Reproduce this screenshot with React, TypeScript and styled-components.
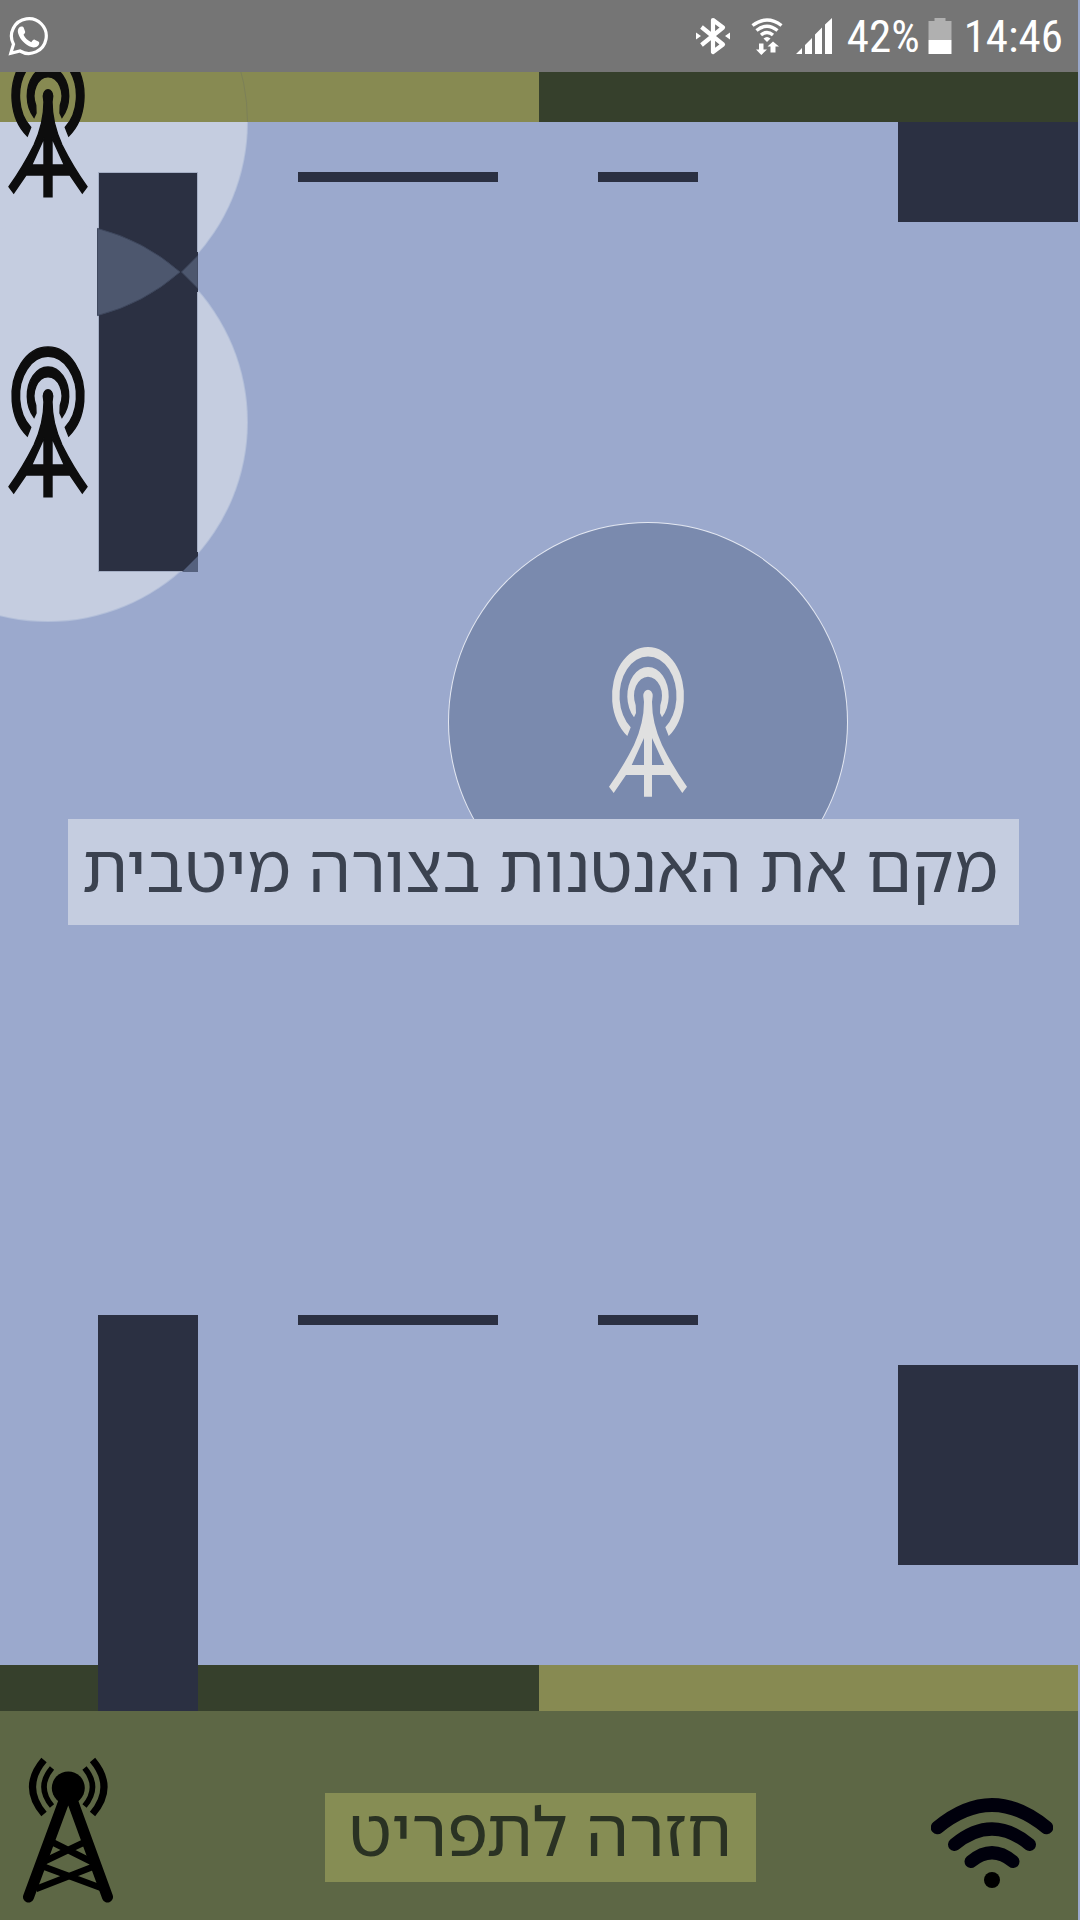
import React from "react";
import styled, { createGlobalStyle } from "styled-components";

const color = {
  status: "#757575",
  sky: "#9ba9cd",
  coverage: "#c5cde0",
  wall: "#2b3042",
  olive: "#878a52",
  forest: "#36402c",
  footer: "#5d6745",
  button: "#868d54",
};

const GlobalStyle = createGlobalStyle`
  * { box-sizing: border-box; }
  body { margin: 0; background: ${color.sky}; }
`;

const Screen = styled.main`
  display: flex;
  flex-direction: column;
  min-height: 100vh;
  padding-right: 2px;
  background: ${color.sky};
  font-family: "Noto Sans Hebrew", "Open Sans", sans-serif;
`;

const StatusBar = styled.header`
  display: flex;
  align-items: center;
  justify-content: space-between;
  height: 72px;
  padding: 0 15px 0 8px;
  background: ${color.status};
  color: #fff;
  font-family: "Roboto Condensed", Roboto, sans-serif;
  font-size: 45px;
  line-height: 72px;
`;

const StatusGroup = styled.div`
  display: flex;
  align-items: center;
  gap: 8px;
`;

const StatusText = styled.span`
  padding-top: 2px;
`;

const StatusIcon = styled.svg<{ $after?: number }>`
  display: block;
  flex: none;
  margin-right: ${(p) => p.$after ?? 0}px;
`;

const GameMap = styled.section`
  position: relative;
  display: flex;
  flex: 1;
  flex-direction: column;
  justify-content: space-between;
  min-height: 1639px;
  overflow: hidden;
`;

const Strip = styled.div<{ $height: number }>`
  position: relative;
  display: flex;
  height: ${(p) => p.$height}px;
  overflow: hidden;
`;

const StripHalf = styled.div<{ $tone: string }>`
  flex: 1;
  background: ${(p) => p.$tone};
`;

const RangeOutline = styled.div`
  position: absolute;
  left: -152px;
  top: -150px;
  width: 400px;
  height: 400px;
  border: 1px solid #7c8058;
  border-radius: 50%;
`;

type Box = { x: number; y: number; w: number; h: number };

const Wall = styled.div<{ $box: Box; $edge?: boolean }>`
  position: absolute;
  left: ${(p) => p.$box.x}px;
  top: ${(p) => p.$box.y}px;
  width: ${(p) => p.$box.w}px;
  height: ${(p) => p.$box.h}px;
  background: ${color.wall};
  border: ${(p) => (p.$edge ? "1px solid #a5afc5" : "0")};
`;

const EastWall = styled(Wall)`
  left: auto;
  right: 0;
`;

const CoverageArea = styled.div`
  position: absolute;
  inset: 50px 0 0 0;
  overflow: hidden;
  isolation: isolate;
`;

const Coverage = styled.div<{ $cx: number; $cy: number; $selected?: boolean }>`
  position: absolute;
  left: ${(p) => p.$cx - 200}px;
  top: ${(p) => p.$cy - 200}px;
  width: 400px;
  height: 400px;
  border-radius: 50%;
  background: ${(p) => (p.$selected ? "#e4e8f2" : "#b3bfd9")};

  &::before {
    content: "";
    position: absolute;
    inset: 1px;
    z-index: 1;
    border-radius: 50%;
    background: ${(p) => (p.$selected ? "#7a8aae" : color.coverage)};
  }
`;

const Overlap = styled.svg`
  position: absolute;
  left: 97px;
  top: 100px;
`;

const AntennaButton = styled.button<{ $cx: number; $cy: number; $selected?: boolean }>`
  position: absolute;
  left: ${(p) => p.$cx - 50}px;
  top: ${(p) => p.$cy - 75}px;
  width: 100px;
  height: 150px;
  padding: 0;
  border: 0;
  background: none;
  color: ${(p) => (p.$selected ? "#e0e0e0" : "#0d0d0d")};

  svg {
    display: block;
    overflow: visible;
  }
`;

const Message = styled.p`
  position: absolute;
  left: 68px;
  right: 59px;
  top: 747px;
  height: 106px;
  margin: 0;
  padding: 0 20px 0 13px;
  background: ${color.coverage};
  color: #3b4250;
  font-size: 67px;
  line-height: 94px;
  text-align: center;
  white-space: nowrap;
`;

const Footer = styled.footer`
  display: grid;
  grid-template-columns: 1fr auto 1fr;
  align-items: center;
  height: 209px;
  padding: 43px 19px 0 22px;
  background: ${color.footer};
`;

const MenuButton = styled.button`
  width: 431px;
  height: 89px;
  padding: 0 24px 14px 26px;
  border: 0;
  background: ${color.button};
  color: #2a3223;
  font-family: inherit;
  font-size: 68px;
  line-height: 70px;
  white-space: nowrap;
`;

const IconButton = styled.button<{ $end?: boolean }>`
  display: block;
  justify-self: ${(p) => (p.$end ? "end" : "start")};
  padding: ${(p) => (p.$end ? "12px 6px 0 0" : "0 0 12px")};
  border: 0;
  background: none;

  svg {
    display: block;
  }
`;

const antennas = [
  { x: 48, y: 50, selected: false },
  { x: 48, y: 350, selected: false },
  { x: 648, y: 650, selected: true },
];

const walls: (Box & { edge?: boolean })[] = [
  { x: 98, y: 100, w: 100, h: 400, edge: true },
  { x: 298, y: 100, w: 200, h: 10 },
  { x: 598, y: 100, w: 100, h: 10 },
  { x: 298, y: 1243, w: 200, h: 10 },
  { x: 598, y: 1243, w: 100, h: 10 },
  { x: 98, y: 1243, w: 100, h: 396 },
];

const eastWalls: Box[] = [
  { x: 898, y: 50, w: 180, h: 100 },
  { x: 898, y: 1293, w: 180, h: 200 },
];

function AntennaGlyph({ outlined }: { outlined: boolean }) {
  return (
    <svg
      width="100"
      height="150"
      viewBox="0 0 100 150"
      fill="currentColor"
      fillRule="evenodd"
      stroke="currentColor"
      strokeWidth={outlined ? 1.4 : 0}
      aria-hidden="true"
    >
      <path d="M29.3 89A36 49 0 1 1 70.7 89L67.3 80.3A28.5 39.5 0 1 0 32.7 80.3Z" />
      <path d="M36 70.3A20.7 29 0 1 1 64 70.3L62 66L62.3 58.2A14 19.3 0 1 0 37.7 58.2L38 66Z" />
      <path d="M45.3 49a4.7 6.3 0 0 1 9.4 0L54 55Q54 76 64 98Q75 120 89 139.7L84.3 146L72 128H54V149.7H46V128H28L15.7 146L11 139.7Q25 120 36 98Q46 76 46 55ZM46 91L33.7 118H46ZM54 91V118H66.3Z" />
    </svg>
  );
}

function WhatsAppIcon() {
  return (
    <StatusIcon width="40" height="40" viewBox="0 0 40 40" aria-label="WhatsApp">
      <path
        d="M2.8 37.3L5.5 28.2A17.4 17.4 0 1 1 12 35Z"
        fill="none"
        stroke="#fff"
        strokeWidth="3.2"
      />
      <path
        d="M11.2 11.6c1.4-1.6 4-1.3 4.6.4l1.3 3.5c.3 1-.2 1.8-1.6 3.3 1.8 3.6 4.3 5.9 7.8 7.4 1.5-1.9 2.2-3 3.4-2.5l3.6 1.8c1.2.6 1.1 1.6.6 2.9-1.1 2.5-4.5 3.6-7.4 2.7C17.4 29.2 12 23.8 10.2 17.6c-.7-2.3-.4-4.5 1-6z"
        fill="#fff"
      />
    </StatusIcon>
  );
}

function BluetoothIcon() {
  return (
    <StatusIcon $after={12} width="36" height="40" viewBox="0 0 36 40" aria-label="Bluetooth">
      <path d="M6.5 11L28 28.5L18 36V4L28 11.5L6.5 29" fill="none" stroke="#fff" strokeWidth="4.2" strokeLinejoin="round" />
      <path d="M1 16.5L6 20L1 23.5ZM35 16.5L30 20L35 23.5Z" fill="#fff" />
    </StatusIcon>
  );
}

function StatusWifiIcon() {
  return (
    <StatusIcon $after={4} width="32" height="40" viewBox="0 0 32 40" aria-label="Wi-Fi">
      <g fill="none" stroke="#fff" strokeWidth="3.4">
        <path d="M1.5 9.5Q16-1.5 30.5 9.5" />
        <path d="M5.5 14.5Q16 6 26.5 14.5" />
        <path d="M10 19Q16 14 22 19" />
      </g>
      <path d="M12.5 22.5Q16 19.5 19.5 22.5L16 26Z" fill="#fff" />
      <path d="M8 27.5h4.5v6H16L10.3 39L5 33.5h3ZM19.5 36.5h5v-6H28L22 25.5L16.5 30.5h3Z" fill="#fff" />
    </StatusIcon>
  );
}

function SignalIcon() {
  return (
    <StatusIcon $after={6} width="38" height="40" viewBox="0 0 38 40" fill="#fff" aria-label="Signal">
      <path d="M1 38L7 32V38ZM10 29L17 22V38H10ZM20 18.5L27 11.5V38H20ZM30 8.5L37 2V38H30Z" />
    </StatusIcon>
  );
}

function BatteryIcon() {
  return (
    <StatusIcon $after={4} width="24" height="40" viewBox="0 0 24 40" aria-label="Battery">
      <path d="M6.5 2H17.5V5H23.5V24H.5V5H6.5Z" fill="#b0b0b0" />
      <path d="M.5 24H23.5V38H.5Z" fill="#fff" />
    </StatusIcon>
  );
}

function TowerIcon() {
  return (
    <svg width="92" height="148" viewBox="0 0 92 148" fill="none" stroke="#000" aria-hidden="true">
      <circle cx="46.3" cy="31" r="16.5" fill="#000" stroke="none" />
      <path d="M42 44L6.5 140M50.5 44L85.5 140" strokeWidth="11" strokeLinecap="round" />
      <path d="M28 84L72 106M65 84L19 106M20 109L82 132M73 109L14 132" strokeWidth="6.5" />
      <path d="M22 3Q-1 30 22 57M70.5 3Q93.5 30 70.5 57" strokeWidth="7" />
      <path d="M30 11Q14 30 30 49M62.5 11Q78.5 30 62.5 49" strokeWidth="5.5" />
    </svg>
  );
}

function WifiIcon() {
  return (
    <svg width="122" height="90" viewBox="0 0 122 90" fill="none" stroke="#00000c" strokeLinecap="round" aria-hidden="true">
      <path d="M6.5 29.5Q61-15.5 115.5 29.5" strokeWidth="13.5" />
      <path d="M23.5 46.5Q61 15.5 98.5 46.5" strokeWidth="13" />
      <path d="M40 63.5Q61 46 82 63.5" strokeWidth="13" />
      <circle cx="61" cy="82" r="8" fill="#000" stroke="none" />
    </svg>
  );
}

export default function App() {
  return (
    <Screen>
      <GlobalStyle />
      <StatusBar>
        <WhatsAppIcon />
        <StatusGroup>
          <BluetoothIcon />
          <StatusWifiIcon />
          <SignalIcon />
          <StatusText>42%</StatusText>
          <BatteryIcon />
          <StatusText as="time">14:46</StatusText>
        </StatusGroup>
      </StatusBar>

      <GameMap>
        <Strip $height={50}>
          <StripHalf $tone={color.olive} />
          <StripHalf $tone={color.forest} />
          <RangeOutline />
        </Strip>
        <Strip $height={46}>
          <StripHalf $tone={color.forest} />
          <StripHalf $tone={color.olive} />
        </Strip>

        <CoverageArea>
          {antennas.map((a) => (
            <Coverage key={a.y} $cx={a.x} $cy={a.y - 50} $selected={a.selected} />
          ))}
        </CoverageArea>

        {walls.map((w) => (
          <Wall key={`${w.x}-${w.y}`} $box={w} $edge={w.edge} />
        ))}
        {eastWalls.map((w) => (
          <EastWall key={w.y} $box={w} />
        ))}

        <Overlap width="101" height="400" viewBox="97 172 101 400" aria-hidden="true">
          <path d="M197 252H198V292H197ZM178 571H198V552H197V571Z" fill={color.wall} />
          <g fill="#4d576e" stroke="#3e475d">
            <path d="M97.5 228.4A200 200 0 0 1 180 272A200 200 0 0 1 97.5 315.6Z" />
            <path d="M181.5 272L198 255.5V288.5Z" />
          </g>
          <path d="M182 572L198 556V572Z" fill="#55617e" />
        </Overlap>

        {antennas.map((a) => (
          <AntennaButton key={a.y} $cx={a.x} $cy={a.y} $selected={a.selected} type="button" aria-label="אנטנה">
            <AntennaGlyph outlined={!a.selected} />
          </AntennaButton>
        ))}

        <Message dir="rtl">מקם את האנטנות בצורה מיטבית</Message>
      </GameMap>

      <Footer>
        <IconButton type="button" aria-label="אנטנה">
          <TowerIcon />
        </IconButton>
        <MenuButton type="button" dir="rtl">
          חזרה לתפריט
        </MenuButton>
        <IconButton $end type="button" aria-label="Wi-Fi">
          <WifiIcon />
        </IconButton>
      </Footer>
    </Screen>
  );
}
